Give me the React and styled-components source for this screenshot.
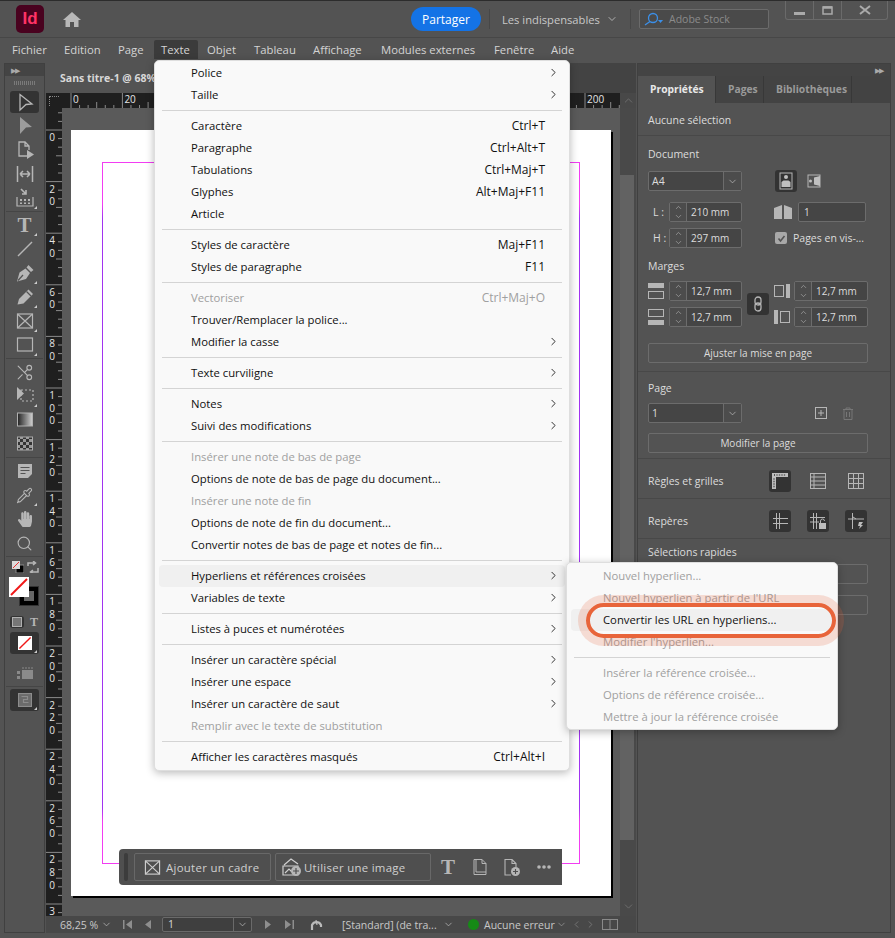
import styled, { createGlobalStyle } from "styled-components";
import { ChevronDown, ChevronUp, ChevronRight, ChevronLeft, Scissors, Search, Pipette } from "lucide-react";
import { FaHandPaper } from "react-icons/fa";

const UI_FONT = `"Open Sans", "Noto Sans", "Liberation Sans", sans-serif`;
const ICON = "#b6b6b6";

const Global = createGlobalStyle`
  * { box-sizing: border-box; }
  html, body { margin: 0; padding: 0; background: #535353; }
  body { font-family: ${UI_FONT}; font-size: 11px; color: #e0e0e0; }
`;

const Frame = styled.div`
  position: relative;
  width: 895px;
  height: 938px;
  overflow: hidden;
  background: #535353;
  border-top: 1px solid #2c2c2c;
`;

/* title bar */
const TitleBar = styled.div`
  display: flex;
  align-items: center;
  height: 37px;
  padding-left: 16px;
  border-bottom: 1px solid #474747;
`;

const Logo = styled.div`
  width: 28px;
  height: 28px;
  border-radius: 5px;
  background: #49021f;
  color: #ff3366;
  font: bold 17px "Liberation Sans", sans-serif;
  display: flex;
  align-items: center;
  justify-content: center;
`;

const Share = styled.button`
  margin-left: auto;
  width: 70px;
  height: 24px;
  border: none;
  border-radius: 12px;
  background: #1473e6;
  color: #fff;
  font: 12px ${UI_FONT};
  padding: 0;
`;

const TitleDivider = styled.span`
  width: 1px;
  height: 20px;
  background: #474747;
  margin: ${(p) => p.$margin};
`;

const WorkspaceName = styled.span`
  width: 98px;
  font-size: 11.2px;
  color: #c8c8c8;
  white-space: nowrap;
`;

const StockBox = styled.div`
  display: flex;
  align-items: center;
  gap: 5px;
  width: 130px;
  height: 20px;
  margin-left: 8px;
  padding-left: 4px;
  background: #4a4a4a;
  border: 1px solid #6b6b6b;
  border-radius: 2px;
  color: #8b8b8b;
  font-size: 10.5px;
`;

const WinControls = styled.div`
  display: flex;
  align-self: flex-start;
  margin: 0 7px 0 16px;
  height: 19px;
  border: 1px solid #6a6a6a;
  border-top: none;
  border-radius: 0 0 3px 3px;
`;

const WinButton = styled.div`
  width: ${(p) => p.$w}px;
  display: flex;
  align-items: center;
  justify-content: center;
  border-left: ${(p) => (p.$first ? "none" : "1px solid #6a6a6a")};
`;

/* menu bar */
const MenuBar = styled.div`
  display: flex;
  gap: 2px;
  height: 25px;
  padding: 2px 0 4px 5px;
`;

const TopItem = styled.div`
  width: ${(p) => p.$w}px;
  padding-left: 7px;
  font-size: 11.3px;
  line-height: 19px;
  color: #d4d4d4;
  white-space: nowrap;
  background: ${(p) => (p.$active ? "#3b3b3b" : "transparent")};
  border-radius: 2px 2px 0 0;
`;

/* main area */
const Workspace = styled.div`
  display: flex;
  height: 870px;
  padding-left: 4px;
`;

const ToolPanel = styled.div`
  width: 41px;
  border: 1px solid #404040;
  display: flex;
  flex-direction: column;
`;

const DockHead = styled.div`
  height: 12px;
  background: #444;
  display: flex;
  align-items: center;
  justify-content: ${(p) => (p.$right ? "flex-end" : "flex-start")};
  padding: 0 ${(p) => (p.$right ? "7px" : "0")} 0 ${(p) => (p.$right ? "0" : "6px")};
  color: #aaa;
  font-size: 7px;
  letter-spacing: -1px;
  flex: none;
`;

const Grip = styled.div`
  height: 14px;
  flex: none;
  margin: 0 9px;
  background: repeating-linear-gradient(90deg, #7a7a7a 0 1px, transparent 1px 2px) center / 100% 4px no-repeat;
`;

const Tool = styled.div`
  position: relative;
  flex: none;
  height: ${(p) => (p.$active ? 22 : 24)}px;
  margin: ${(p) => (p.$active ? "1px 5px" : "0 5px")};
  display: flex;
  align-items: center;
  justify-content: center;
  color: ${ICON};
  background: ${(p) => (p.$active ? "#333" : "transparent")};
  border-radius: 3px;

  &::after {
    content: "";
    display: ${(p) => (p.$corner ? "block" : "none")};
    position: absolute;
    right: 2px;
    bottom: 1px;
    border-left: 3px solid transparent;
    border-bottom: 3px solid #ccc;
  }
`;

const ToolSep = styled.div`
  flex: none;
  height: 1px;
  margin: ${(p) => (p.$wide ? "4px 1px 1px" : "1px")};
  background: ${(p) => (p.$clear ? "transparent" : "#454545")};
`;

const SwatchStrip = styled.div`
  display: flex;
  align-items: center;
  justify-content: space-between;
  height: 13px;
  margin: 2px 5px 0 7px;
  flex: none;
`;

const SwatchStack = styled.div`
  position: relative;
  height: 31px;
  margin: 4px 0 0 4px;
  flex: none;
`;

const Swatch = styled.div`
  position: absolute;
  left: ${(p) => p.$x}px;
  top: ${(p) => p.$y}px;
  width: ${(p) => p.$size}px;
  height: ${(p) => p.$size}px;
`;

const StrokeSwatch = styled(Swatch)`
  background: #000;
  border: 1px solid #333;
  padding: 4px;
  &::before { content: ""; display: block; width: 100%; height: 100%; background: #666; }
`;

const NoneSwatch = styled.svg`
  display: block;
  width: 100%;
  height: 100%;
`;

const FormatRow = styled.div`
  display: flex;
  align-items: center;
  gap: 4px;
  height: 14px;
  margin: 7px 0 2px 5px;
  flex: none;
`;

const FormatBtn = styled.div`
  width: 14px;
  height: 12px;
  border-radius: 3px;
  background: #333;
  display: flex;
  align-items: center;
  justify-content: center;
  &::before { content: ""; width: 8px; height: 8px; background: #777; border: 1px solid #b0b0b0; }
`;

const SerifT = styled.span`
  font: bold ${(p) => p.$size}px / 1 "Liberation Serif", serif;
  color: ${ICON};
  margin-left: ${(p) => p.$ml || 0}px;
`;

/* document column */
const DocColumn = styled.div`
  width: 591px;
  margin-right: 1px;
  display: flex;
  flex-direction: column;
`;

const DocTabs = styled.div`
  flex: none;
  height: 30px;
  background: #434343;
`;

const DocTab = styled.div`
  width: 140px;
  height: 100%;
  padding: 8px 0 0 15px;
  background: #535353;
  font-weight: 700;
  font-size: 10.5px;
  color: #d8d8d8;
  white-space: nowrap;
`;

const RulerRow = styled.div`
  flex: none;
  height: 15px;
  display: flex;
  padding-left: 1px;
`;

const RulerCorner = styled.div`
  width: 16px;
  background: #1f1f1f;
  position: relative;
  &::before {
    content: "";
    position: absolute;
    left: 3px;
    top: 3px;
    width: 9px;
    height: 9px;
    border-top: 1px dotted #888;
    border-left: 1px dotted #888;
  }
`;

const ScrollCap = styled.div`
  width: 16px;
  background: #484848;
  color: #777;
  display: flex;
  align-items: center;
  justify-content: center;
`;

const DocBody = styled.div`
  flex: 1;
  display: flex;
  min-height: 0;
  padding-left: 1px;
`;

const Canvas = styled.div`
  position: relative;
  flex: 1;
  background: #5a5a5a;
  padding: 22px 0 0 9px;
  overflow: hidden;
`;

const PageSheet = styled.div`
  width: 540px;
  height: 766px;
  padding: 32px 0 0 31px;
  background: #fff;
  box-shadow: 2px 2px 0 #000;
`;

const MarginGuide = styled.div`
  width: 478px;
  height: 702px;
  border: 1px solid;
  border-image: linear-gradient(#f23df2 0 6%, #a133f0 8% 92%, #f23df2 94%) 1;
`;

const FloatBar = styled.div`
  position: absolute;
  left: 57px;
  top: 741px;
  width: 443px;
  height: 36px;
  display: flex;
  align-items: center;
  background: #4f4f4f;
  border-radius: 4px 0 0 4px;
  padding-left: 5px;
  color: ${ICON};
`;

const FloatGrip = styled.div`
  width: 4px;
  height: 28px;
  border-radius: 2px;
  background: #3c3c3c;
  margin-right: 6px;
`;

const FloatButton = styled.div`
  width: ${(p) => p.$w}px;
  height: 28px;
  margin-right: 4px;
  padding-left: ${(p) => p.$pad}px;
  display: flex;
  align-items: center;
  gap: ${(p) => p.$gap}px;
  border: 1px solid #686868;
  border-radius: 2px;
  font-size: 11.4px;
  letter-spacing: 0.3px;
  color: #cfcfcf;
  white-space: nowrap;
`;

const FloatIcon = styled.div`
  width: 32px;
  display: flex;
  justify-content: center;
  margin-left: ${(p) => p.$ml || 0}px;
`;

const ScrollTrack = styled.div`
  width: 16px;
  background: #494949;
  padding-top: 67px;
  color: #777;
`;

const ScrollThumb = styled.div`
  width: 14px;
  height: 665px;
  background: #626262;
`;

const ScrollDown = styled.div`
  margin-top: 60px;
  display: flex;
  justify-content: center;
`;

const StatusBar = styled.div`
  flex: none;
  height: 17px;
  margin-left: 1px;
  background: #484848;
  display: flex;
  align-items: center;
  color: #c8c8c8;
  font-size: 10.5px;
`;

const StatusText = styled.span`
  width: ${(p) => p.$w}px;
  margin-left: ${(p) => p.$ml || 0}px;
  white-space: nowrap;
`;

const StatusPage = styled.div`
  display: flex;
  width: 90px;
  height: 15px;
  margin-left: 9px;
  border: 1px solid #6a6a6a;
  border-radius: 2px;
  background: #3f3f3f;
  padding-left: 5px;
  line-height: 13px;
  color: #d8d8d8;
`;

const StatusIcon = styled.span`
  display: flex;
  width: ${(p) => p.$w}px;
  margin-left: ${(p) => p.$ml || 0}px;
  justify-content: center;
  color: ${(p) => p.$color || "#8e8e8e"};
`;

const StatusCaret = styled.span`
  margin-left: auto;
  width: 18px;
  height: 100%;
  border-left: 1px solid #6a6a6a;
  display: flex;
  align-items: center;
  justify-content: center;
  color: #bbb;
`;

const GreenDot = styled.span`
  width: 11px;
  height: 11px;
  border-radius: 50%;
  background: #168a16;
  margin: 0 5px 0 14px;
  flex: none;
`;

const ResizeGrip = styled.span`
  width: 8px;
  height: 8px;
  margin: 4px 0 0 5px;
  background: radial-gradient(#777 40%, transparent 45%) 0 0 / 2px 2px;
  clip-path: polygon(100% 0, 100% 100%, 0 100%);
`;

/* properties panel */
const Panel = styled.div`
  width: 254px;
  border: 1px solid #404040;
  background: #535353;
  display: flex;
  flex-direction: column;
`;

const Tabs = styled.div`
  display: flex;
  height: 27px;
  background: #434343;
  flex: none;
`;

const Tab = styled.div`
  width: ${(p) => p.$w}px;
  padding-left: 12px;
  font-weight: 700;
  font-size: 10.3px;
  line-height: 27px;
  color: ${(p) => (p.$active ? "#e8e8e8" : "#9a9a9a")};
  background: ${(p) => (p.$active ? "#535353" : "#434343")};
  border-right: 1px solid #383838;
  white-space: nowrap;
`;

const Section = styled.div`
  padding: ${(p) => p.$pad || "0 0 0 10px"};
  height: ${(p) => p.$h}px;
  border-bottom: ${(p) => (p.$last ? "none" : "1px solid #484848")};
  display: flex;
  flex-direction: ${(p) => (p.$row ? "row" : "column")};
  align-items: ${(p) => (p.$row ? "center" : "stretch")};
  flex: none;
`;

const Label = styled.div`
  font-size: 10.5px;
  line-height: 14px;
  color: #dcdcdc;
  margin-top: ${(p) => p.$mt || 0}px;
  margin-bottom: ${(p) => p.$mb || 0}px;
  white-space: nowrap;
`;

const Row = styled.div`
  display: flex;
  align-items: center;
`;

const SelectBox = styled.div`
  display: flex;
  align-items: center;
  width: 94px;
  height: 20px;
  padding-left: 3px;
  background: #454545;
  border: 1px solid #6c6c6c;
  border-radius: 2px;
  color: #dcdcdc;
  font-size: 10.5px;
`;

const SelectCaret = styled.span`
  margin-left: auto;
  width: 18px;
  height: 100%;
  border-left: 1px solid #6c6c6c;
  background: #4c4c4c;
  display: flex;
  align-items: center;
  justify-content: center;
  color: #bbb;
`;

const IconButton = styled.div`
  width: 22px;
  height: 22px;
  flex: none;
  margin-left: ${(p) => p.$ml || 0}px;
  display: flex;
  align-items: center;
  justify-content: center;
  border-radius: 3px;
  background: ${(p) => (p.$active ? "#333" : "transparent")};
  color: ${(p) => p.$color || ICON};
`;

const FieldGrid = styled.div`
  display: grid;
  grid-template-columns: ${(p) => p.$cols};
  grid-auto-rows: 20px;
  row-gap: 6px;
  align-items: center;
  margin-top: ${(p) => p.$mt || 0}px;
`;

const DimLabel = styled.span`
  font-size: 10.5px;
  padding-left: 5px;
  color: #dcdcdc;
`;

const Stepper = styled.div`
  display: flex;
  height: 20px;
  border: 1px solid #6c6c6c;
  border-radius: 2px;
  background: #454545;
  color: #dcdcdc;
  font-size: 10px;
  line-height: 18px;
`;

const StepArrows = styled.div`
  width: 17px;
  flex: none;
  border-right: 1px solid #6c6c6c;
  background: #4c4c4c;
  color: #bbb;
  display: flex;
  flex-direction: column;
  align-items: center;
  justify-content: center;
  margin-right: 4px;
`;

const TextField = styled.div`
  height: 20px;
  padding-left: 5px;
  border: 1px solid #6c6c6c;
  border-radius: 2px;
  background: #454545;
  font-size: 10px;
  line-height: 18px;
  color: #dcdcdc;
`;

const Check = styled.span`
  display: flex;
  align-items: center;
  justify-content: center;
  width: 12px;
  height: 12px;
  border-radius: 2px;
  background: #a8a8a8;
  flex: none;
`;

const CheckRow = styled.div`
  display: flex;
  align-items: center;
  gap: 6px;
  grid-column: 4 / 6;
  padding-left: 1px;
  font-size: 10.5px;
  color: #dcdcdc;
  white-space: nowrap;
`;

const PanelIcon = styled.div`
  display: flex;
  color: ${ICON};
`;

const LinkBtn = styled.div`
  grid-column: 3;
  grid-row: 1 / span 2;
  justify-self: center;
  width: 22px;
  height: 22px;
  border-radius: 3px;
  background: #333;
  display: flex;
  align-items: center;
  justify-content: center;
  color: ${ICON};
`;

const WideButton = styled.div`
  width: 220px;
  height: 20px;
  margin-top: ${(p) => p.$mt || 0}px;
  border: 1px solid #6c6c6c;
  border-radius: 2px;
  text-align: center;
  font-size: 10px;
  line-height: 18px;
  color: #dcdcdc;
`;

const ButtonTrio = styled.div`
  display: flex;
  margin: 0 23px 0 auto;
  gap: 16px;
`;

const GhostField = styled.div`
  width: 68px;
  height: 20px;
  margin: ${(p) => p.$mt}px 22px 0 0;
  align-self: flex-end;
  border: 1px solid #6c6c6c;
  border-radius: 2px;
`;

/* menus */
const DropMenu = styled.div`
  position: absolute;
  z-index: ${(p) => p.$z};
  left: ${(p) => p.$x}px;
  top: ${(p) => p.$y}px;
  width: ${(p) => p.$w}px;
  padding: ${(p) => p.$pad};
  background: #f9f9f9;
  border: 1px solid #dedede;
  border-radius: 5px;
  box-shadow: 0 2px 9px rgba(0, 0, 0, 0.28);
  font-size: 11.3px;
`;

const MenuRow = styled.div`
  display: flex;
  align-items: center;
  height: 22px;
  padding: 0 0 2px 32px;
  border-radius: 4px;
  background: ${(p) => (p.$hot ? "#f0f0f0" : "transparent")};
  color: ${(p) => (p.$off ? "#a0a0a0" : "#101010")};
  white-space: nowrap;
`;

const Shortcut = styled.span`
  margin-left: auto;
  font-size: 12px;
`;

const ArrowSlot = styled.span`
  width: 20px;
  flex: none;
  margin-left: ${(p) => (p.$push ? "auto" : "0")};
  padding-left: 2px;
  display: flex;
`;

const MenuSep = styled.div`
  height: 1px;
  margin: 4px 3px;
  background: #d4d4d4;
`;

const Ring = styled.div`
  position: absolute;
  left: 19px;
  top: 40px;
  width: 250px;
  height: 35px;
  border: 4px solid #e8643a;
  border-radius: 18px;
  box-shadow: 0 0 0 8px rgba(232, 100, 58, 0.2);
  pointer-events: none;
`;

/* drawings */
const Svg = ({ w = 22, h = 22, vb, sw = 1.3, fill = "none", children }) => (
  <svg width={w} height={h} viewBox={vb || `0 0 ${w} ${h}`} fill={fill} stroke={fill === "none" ? "currentColor" : "none"} strokeWidth={sw}>
    {children}
  </svg>
);

const FrameX = ({ s = 18 }) => (
  <Svg w={s} h={s} vb="0 0 18 18" sw={1.2}>
    <rect x="1.5" y="2" width="15" height="14" />
    <path d="M1.5 2 16.5 16M16.5 2 1.5 16" />
  </Svg>
);

const Caret = ({ size = 11 }) => <ChevronDown size={size} strokeWidth={1.6} />;

const tools = [
  { active: true, icon: <Svg><path d="M6 3.500 18 13l-6 .5L6 19Z" /></Svg> },
  { icon: <Svg fill="#9c9c9c"><path d="M6 2 18 12l-6 .5L6 19Z" /></Svg> },
  { icon: <Svg><path d="M13 17H5V3h6l4 4v4M11 3v4h4" /><path d="M13 11l7 4.500-7 4.500Z" fill="#b6b6b6" stroke="none" /></Svg> },
  { icon: <Svg sw={1.5}><path d="M3.500 3v16M18.500 3v16M6 11h10M6 11l3-3M6 11l3 3M16 11l-3-3M16 11l-3 3" /></Svg> },
  {
    corner: true,
    sep: true,
    icon: (
      <Svg sw={1.2}>
        <path d="M7 2l5 5M12 3v4H8" strokeWidth="1.6" />
        <path d="M3 10v9h16v-9" />
        <path d="M6 12h2v2H6ZM10 12h2v2h-2ZM14 12h2v2h-2ZM6 15.500h2v1.500H6ZM10 15.500h2v1.500h-2ZM14 15.500h2v1.500h-2Z" fill="#b6b6b6" stroke="none" />
      </Svg>
    ),
  },
  { corner: true, icon: <SerifT $size={21}>T</SerifT> },
  { icon: <Svg sw={1.4}><path d="M4 18 18 4" /></Svg> },
  {
    corner: true,
    icon: (
      <Svg fill="#b6b6b6">
        <path d="M3 19.500 5.500 10.500l6-4 4.500 4.500-4 6ZM12.500 5.500l2-2.500 5 5-2.500 2Z" />
        <path d="M4 18.500 9 13" stroke="#535353" strokeWidth="1.200" />
      </Svg>
    ),
  },
  {
    corner: true,
    icon: (
      <Svg fill="#b6b6b6">
        <path d="M3.500 18.500 5 13 14.500 3.500 19 8 9.500 17.500Z" />
        <path d="M12.500 5.500l4.500 4.500" stroke="#535353" />
      </Svg>
    ),
  },
  { corner: true, icon: <FrameX s={18} /> },
  { corner: true, sep: true, icon: <Svg sw={1.2}><rect x="3.500" y="4" width="15" height="13" /></Svg> },
  { icon: <Scissors size={19} strokeWidth={1.4} style={{ transform: "scaleX(-1)" }} /> },
  { corner: true, icon: <Svg sw={1.2}><path d="M3 2v13l7-6.500Z" fill="#b6b6b6" stroke="none" /><rect x="7" y="5" width="12" height="11" strokeDasharray="2 2" /></Svg> },
  { icon: <Svg sw={0}><defs><linearGradient id="grad"><stop stopColor="#222" /><stop offset="1" stopColor="#d0d0d0" /></linearGradient></defs><rect x="3.500" y="4" width="15" height="13" fill="url(#grad)" stroke="#b0b0b0" strokeWidth="1" /></Svg> },
  { sep: true, icon: <Svg sw={0}><defs><pattern id="chk" width="6" height="6" patternUnits="userSpaceOnUse"><rect width="6" height="6" fill="#999" /><rect width="3" height="3" fill="#333" /><rect x="3" y="3" width="3" height="3" fill="#333" /></pattern></defs><rect x="3.500" y="4" width="15" height="13" fill="url(#chk)" stroke="#aaa" strokeWidth="1" /></Svg> },
  { icon: <Svg fill="#b6b6b6"><path d="M4 4h14v10l-4 4H4ZM6.500 7v1h9V7Zm0 3v1h9v-1Zm0 3v1h5v-1Z" fillRule="evenodd" /></Svg> },
  { corner: true, icon: <Pipette size={17} strokeWidth={1.5} /> },
  { icon: <FaHandPaper size={16} /> },
  { sep: true, icon: <Search size={17} strokeWidth={1.6} /> },
];

const Slash = () => (
  <NoneSwatch viewBox="0 0 20 20">
    <rect width="20" height="20" fill="#fff" />
    <path d="M2 18 18 2" stroke="#f01818" strokeWidth="2" />
  </NoneSwatch>
);

function HRuler() {
  const pitch = 51.4;
  const ticks = [];
  for (let i = 0; i < 66; i++) ticks.push(9 + (i * pitch) / 6);
  return (
    <svg width="558" height="15" style={{ display: "block", background: "#1f1f1f" }}>
      {ticks.map((x, i) => (
        <line key={i} x1={x} x2={x} y1={i % 6 === 0 ? 0 : i % 3 === 0 ? 9 : 12} y2="15" stroke="#8a8a8a" />
      ))}
      {[...Array(11)].map((_, i) => (
        <text key={i} x={9 + i * pitch + 2} y="10" fontSize="10" fontFamily="Open Sans" fill="#e4e4e4">{i * 20}</text>
      ))}
    </svg>
  );
}

function VRuler() {
  const pitch = 51.6;
  const marks = [];
  for (let i = -3; i < 96; i++) marks.push({ y: 22 + (i * pitch) / 6, i });
  return (
    <svg width="16" height="808" style={{ display: "block", background: "#1f1f1f", flex: "none" }}>
      {marks.map(({ y, i }) => (
        <line key={i} x1={i % 6 === 0 ? 0 : i % 3 === 0 ? 10 : 12} x2="16" y1={y} y2={y} stroke="#8a8a8a" />
      ))}
      {[...Array(16)].map((_, k) => (
        <text
          key={k}
          x="6"
          y={22 + k * pitch}
          fontSize="10"
          fontFamily="Open Sans"
          fill="#e4e4e4"
          style={{ writingMode: "vertical-rl", textOrientation: "upright", letterSpacing: "-1.4px" }}
        >
          {k === 15 ? "3" : k * 20}
        </text>
      ))}
    </svg>
  );
}

const menuItems = [
  { t: "Police", a: 1 }, { t: "Taille", a: 1 }, "-",
  { t: "Caractère", k: "Ctrl+T" }, { t: "Paragraphe", k: "Ctrl+Alt+T" }, { t: "Tabulations", k: "Ctrl+Maj+T" }, { t: "Glyphes", k: "Alt+Maj+F11" }, { t: "Article" }, "-",
  { t: "Styles de caractère", k: "Maj+F11" }, { t: "Styles de paragraphe", k: "F11" }, "-",
  { t: "Vectoriser", k: "Ctrl+Maj+O", off: 1 }, { t: "Trouver/Remplacer la police..." }, { t: "Modifier la casse", a: 1 }, "-",
  { t: "Texte curviligne", a: 1 }, "-",
  { t: "Notes", a: 1 }, { t: "Suivi des modifications", a: 1 }, "-",
  { t: "Insérer une note de bas de page", off: 1 }, { t: "Options de note de bas de page du document..." }, { t: "Insérer une note de fin", off: 1 }, { t: "Options de note de fin du document..." }, { t: "Convertir notes de bas de page et notes de fin..." }, "-",
  { t: "Hyperliens et références croisées", a: 1, hot: 1 }, { t: "Variables de texte", a: 1 }, "-",
  { t: "Listes à puces et numérotées", a: 1 }, "-",
  { t: "Insérer un caractère spécial", a: 1 }, { t: "Insérer une espace", a: 1 }, { t: "Insérer un caractère de saut", a: 1 }, { t: "Remplir avec le texte de substitution", off: 1 }, "-",
  { t: "Afficher les caractères masqués", k: "Ctrl+Alt+I" },
];

const subItems = [
  { t: "Nouvel hyperlien...", off: 1 }, { t: "Nouvel hyperlien à partir de l'URL", off: 1 }, { t: "Convertir les URL en hyperliens...", hot: 1 }, { t: "Modifier l'hyperlien...", off: 1 }, "-",
  { t: "Insérer la référence croisée...", off: 1 }, { t: "Options de référence croisée...", off: 1 }, { t: "Mettre à jour la référence croisée", off: 1 },
];

function MenuList({ items }) {
  return items.map((it, i) =>
    it === "-" ? (
      <MenuSep key={i} />
    ) : (
      <MenuRow key={i} $off={it.off} $hot={it.hot}>
        {it.t}
        {it.k && <Shortcut>{it.k}</Shortcut>}
        {(it.k || it.a) && (
          <ArrowSlot $push={!it.k}>
            {it.a && <ChevronRight size={13} strokeWidth={1.7} color="#222" />}
          </ArrowSlot>
        )}
      </MenuRow>
    )
  );
}

const topMenu = [["Fichier", 50], ["Edition", 52], ["Page", 41], ["Texte", 44], ["Objet", 45], ["Tableau", 57], ["Affichage", 66], ["Modules externes", 111], ["Fenêtre", 55], ["Aide", 36]];

function Stepped({ value }) {
  return (
    <Stepper>
      <StepArrows>
        <ChevronUp size={9} strokeWidth={1.5} />
        <ChevronDown size={9} strokeWidth={1.5} />
      </StepArrows>
      {value}
    </Stepper>
  );
}

function Properties() {
  const cols = "21px 73px 32px 20px 74px";
  return (
    <Panel>
      <DockHead $right>▶▶</DockHead>
      <Tabs>
        <Tab $active $w={78}>Propriétés</Tab>
        <Tab $w={48}>Pages</Tab>
        <Tab $w={88}>Bibliothèques</Tab>
      </Tabs>
      <Section $h={33} $pad="10px 0 0 10px">
        <Label>Aucune sélection</Label>
      </Section>
      <Section $h={236}>
        <Label $mt={11} $mb={9}>Document</Label>
        <Row>
          <SelectBox>A4<SelectCaret><Caret /></SelectCaret></SelectBox>
          <IconButton $active $ml={33}>
            <Svg w={14} h={18} vb="0 0 14 18" sw={1}><rect x="1" y="1" width="12" height="16" /><circle cx="7" cy="5" r="2" fill="#c0c0c0" stroke="none" /><path d="M2.500 15v-5l2-1.500h5l2 1.500v5Z" fill="#c0c0c0" stroke="none" /></Svg>
          </IconButton>
          <IconButton $ml={6}>
            <Svg w={14} h={14} vb="0 0 14 14" sw={1}><rect x="1" y="1" width="12" height="12" /><circle cx="3.500" cy="7" r="1.500" fill="#c0c0c0" stroke="none" /><path d="M7 3.500 13 2v10L7 10.500Z" fill="#c0c0c0" stroke="none" /></Svg>
          </IconButton>
        </Row>
        <FieldGrid $cols="21px 73px 32px 24px 68px" $mt={10}>
          <DimLabel>L :</DimLabel>
          <Stepped value="210 mm" />
          <span />
          <PanelIcon>
            <Svg w={18} h={16} vb="0 0 18 16" fill="#b6b6b6"><path d="M0 4 8 1v14H0ZM10 1l8 3v11h-8Z" /></Svg>
          </PanelIcon>
          <TextField>1</TextField>
          <DimLabel>H :</DimLabel>
          <Stepped value="297 mm" />
          <span />
          <CheckRow>
            <Check><svg width="9" height="9" viewBox="0 0 9 9" fill="none" stroke="#535353" strokeWidth="1.6"><path d="M1.500 4.500 3.500 7l4-5" /></svg></Check>
            Pages en vis-...
          </CheckRow>
        </FieldGrid>
        <Label $mt={11} $mb={8}>Marges</Label>
        <FieldGrid $cols={cols}>
          <PanelIcon><Svg w={16} h={16} vb="0 0 16 16" sw={1}><rect x="0" y="0" width="16" height="5" fill="#b6b6b6" stroke="none" /><rect x=".5" y="8.500" width="15" height="7" /></Svg></PanelIcon>
          <Stepped value="12,7 mm" />
          <LinkBtn>
            <svg width="10" height="16" viewBox="0 0 10 16" fill="none" stroke="currentColor" strokeWidth="1.3"><rect x="2" y="1" width="6" height="8" rx="3" /><rect x="2" y="7" width="6" height="8" rx="3" /></svg>
          </LinkBtn>
          <PanelIcon><Svg w={16} h={14} vb="0 0 16 14" sw={1}><rect x=".5" y="1.500" width="9" height="11" /><rect x="12" y="0" width="4" height="14" fill="#b6b6b6" stroke="none" /></Svg></PanelIcon>
          <Stepped value="12,7 mm" />
          <PanelIcon><Svg w={16} h={16} vb="0 0 16 16" sw={1}><rect x=".5" y=".5" width="15" height="7" /><rect x="0" y="11" width="16" height="5" fill="#b6b6b6" stroke="none" /></Svg></PanelIcon>
          <Stepped value="12,7 mm" />
          <PanelIcon><Svg w={16} h={14} vb="0 0 16 14" sw={1}><rect x="0" y="0" width="4" height="14" fill="#b6b6b6" stroke="none" /><rect x="6.500" y="1.500" width="9" height="11" /></Svg></PanelIcon>
          <Stepped value="12,7 mm" />
        </FieldGrid>
        <WideButton $mt={16}>Ajuster la mise en page</WideButton>
      </Section>
      <Section $h={87}>
        <Label $mt={9} $mb={7}>Page</Label>
        <Row>
          <SelectBox>1<SelectCaret><Caret /></SelectCaret></SelectBox>
          <IconButton $ml={68}>
            <Svg w={12} h={12} vb="0 0 12 12" sw={1}><rect x=".5" y=".5" width="11" height="11" /><path d="M6 3v6M3 6h6" /></Svg>
          </IconButton>
          <IconButton $ml={5} $color="#777">
            <Svg w={12} h={13} vb="0 0 12 13" sw={1}><path d="M1 2.500h10M4 2.500V1h4v1.500M2 2.500V12.500h8V2.500M4.500 5v5M7.500 5v5" /></Svg>
          </IconButton>
        </Row>
        <WideButton $mt={9}>Modifier la page</WideButton>
      </Section>
      <Section $h={40} $row $pad="5px 0 0 10px">
        <Label>Règles et grilles</Label>
        <ButtonTrio>
          <IconButton $active>
            <Svg w={16} h={16} vb="0 0 16 16" fill="#bdbdbd"><path d="M0 0h16v4H4v12H0Z" /><path d="M2 2h1M5 1.500v1M7.500 1.500v1M10 1.500v1M12.500 1.500v1M1.500 6h1M1.500 8.500h1M1.500 11h1M1.500 13.500h1" stroke="#333" /></Svg>
          </IconButton>
          <IconButton>
            <Svg w={16} h={16} vb="0 0 16 16" sw={1}><rect x=".5" y=".5" width="15" height="15" /><path d="M0 4h16M0 8h16M0 12h16M4 0v16" /></Svg>
          </IconButton>
          <IconButton>
            <Svg w={16} h={16} vb="0 0 16 16" sw={1}><rect x=".5" y=".5" width="15" height="15" /><path d="M0 5.500h16M0 10.500h16M5.500 0v16M10.500 0v16" /></Svg>
          </IconButton>
        </ButtonTrio>
      </Section>
      <Section $h={40} $row $pad="5px 0 0 10px">
        <Label>Repères</Label>
        <ButtonTrio>
          <IconButton $active>
            <Svg w={16} h={16} vb="0 0 16 16" sw={1}><path d="M4.500 0v16M7.500 0v16M1 5.500h15M1 10.500h15" /></Svg>
          </IconButton>
          <IconButton $active>
            <Svg w={16} h={16} vb="0 0 16 16" sw={1}><path d="M3.500 0v16M6.500 0v16M0 4.500h15M0 9h9" /><rect x="9" y="10" width="7" height="6" fill="#bdbdbd" stroke="none" /><path d="M10.500 10V8a2 2 0 0 1 4 0" /></Svg>
          </IconButton>
          <IconButton $active>
            <Svg w={16} h={16} vb="0 0 16 16" sw={1}><path d="M4.500 0v16M0 6h16M5 4l3 2" /><path d="M11 9h4l-2 3h2l-4 4 1-3h-2Z" fill="#bdbdbd" stroke="none" /></Svg>
          </IconButton>
        </ButtonTrio>
      </Section>
      <Section $h={100} $last $pad="6px 0 0 10px">
        <Label>Sélections rapides</Label>
        <GhostField $mt={5} />
        <GhostField $mt={11} />
      </Section>
    </Panel>
  );
}

export default function App() {
  return (
    <>
      <Global />
      <Frame>
        <TitleBar>
          <Logo>Id</Logo>
          <svg width="18" height="15" viewBox="0 0 18 15" fill="#b8b8b8" style={{ marginLeft: 19 }}>
            <path d="M9 0l9 8h-2.500v7H11v-5H7v5H2.500V8H0Z" />
          </svg>
          <Share>Partager</Share>
          <TitleDivider $margin="0 12px 0 8px" />
          <WorkspaceName>Les indispensables</WorkspaceName>
          <ChevronDown size={12} strokeWidth={1.8} color="#bbb" style={{ marginLeft: 6 }} />
          <TitleDivider $margin="0 0 0 12px" />
          <StockBox>
            <svg width="20" height="14" viewBox="0 0 20 14" fill="none" stroke="#3b8fe8" strokeWidth="1.3">
              <circle cx="9" cy="6" r="4.500" />
              <path d="M6 9.500 1 13" />
              <path d="M14 8h5l-2.500 3Z" fill="#3b8fe8" stroke="none" />
            </svg>
            Adobe Stock
          </StockBox>
          <WinControls>
            <WinButton $first $w={27}>
              <svg width="11" height="12" viewBox="0 0 11 12"><rect y="8" width="11" height="3" fill="#aaa" /></svg>
            </WinButton>
            <WinButton $w={28}>
              <svg width="11" height="9" viewBox="0 0 11 9" fill="none" stroke="#aaa" strokeWidth="1.5"><rect x="1" y="1" width="9" height="7" /><path d="M1 1.500h9" strokeWidth="2.500" /></svg>
            </WinButton>
            <WinButton $w={46}>
              <svg width="12" height="10" viewBox="0 0 12 10" stroke="#aaa" strokeWidth="2"><path d="M1 1l10 8M11 1 1 9" /></svg>
            </WinButton>
          </WinControls>
        </TitleBar>

        <MenuBar>
          {topMenu.map(([t, w]) => (
            <TopItem key={t} $w={w} $active={t === "Texte"}>{t}</TopItem>
          ))}
        </MenuBar>

        <Workspace>
          <ToolPanel>
            <DockHead>▶▶</DockHead>
            <Grip />
            {tools.map((t, i) => (
              <div key={i}>
                <Tool $active={t.active} $corner={t.corner}>{t.icon}</Tool>
                {t.sep && <ToolSep />}
              </div>
            ))}
            <SwatchStrip>
              <svg width="12" height="12" viewBox="0 0 12 12"><rect x="4" y="4" width="8" height="8" fill="#000" stroke="#888" /><rect width="8" height="8" fill="#ddd" /><path d="M1 7 7 1" stroke="#e33" /></svg>
              <svg width="12" height="12" viewBox="0 0 12 12" fill="none" stroke="#b6b6b6" strokeWidth="1.5"><path d="M1 5V2h7M6 0l2.500 2L6 4M11 7v4H4M6 9l-2.500 2L6 13" /></svg>
            </SwatchStrip>
            <SwatchStack>
              <StrokeSwatch $x={10} $y={9} $size={20} />
              <Swatch $x={0} $y={0} $size={20}><Slash /></Swatch>
            </SwatchStack>
            <FormatRow>
              <FormatBtn />
              <SerifT $size={12} $ml={2}>T</SerifT>
            </FormatRow>
            <Tool $active $corner>
              <svg width="14" height="14" viewBox="0 0 20 20"><rect width="20" height="20" fill="#fff" /><path d="M2 18 18 2" stroke="#f01818" strokeWidth="2" /></svg>
            </Tool>
            <ToolSep $wide $clear />
            <Tool>
              <svg width="16" height="12" viewBox="0 0 16 12" fill="#8a8a8a"><rect x="5" y="3" width="11" height="9" /><rect x="0" y="4" width="3" height="3" /><rect x="0" y="9" width="3" height="3" /><path d="M6 0v2M9 0v2M12 0v2M15 0v2" stroke="#8a8a8a" /></svg>
            </Tool>
            <ToolSep />
            <Tool $active $corner>
              <svg width="14" height="14" viewBox="0 0 14 14" fill="none" stroke="#8c8c8c" strokeWidth="1.200"><rect x=".5" y=".5" width="13" height="13" fill="#6b6b6b" /><path d="M3.500 3.500h6v3h-4v3h5" /></svg>
            </Tool>
          </ToolPanel>

          <DocColumn>
            <DocTabs><DocTab>Sans titre-1 @ 68%</DocTab></DocTabs>
            <RulerRow>
              <RulerCorner />
              <HRuler />
              <ScrollCap><ChevronUp size={13} strokeWidth={1.4} /></ScrollCap>
            </RulerRow>
            <DocBody>
              <VRuler />
              <Canvas>
                <PageSheet><MarginGuide /></PageSheet>
                <FloatBar>
                  <FloatGrip />
                  <FloatButton $w={137} $pad={9} $gap={5}><FrameX s={17} />Ajouter un cadre</FloatButton>
                  <FloatButton $w={156} $pad={6} $gap={2}>
                    <Svg w={20} h={20} vb="0 0 20 20" sw={1.2}>
                      <path d="M2 8 9 2l7 5M1 9h15v9H1Z" />
                      <path d="M3 16l4-4 3 3" />
                      <circle cx="14" cy="14" r="5" fill="#b6b6b6" stroke="none" />
                      <path d="M14 11v6M11 14h6" stroke="#4f4f4f" />
                    </Svg>
                    Utiliser une image
                  </FloatButton>
                  <FloatIcon $ml={-3}><SerifT $size={21}>T</SerifT></FloatIcon>
                  <FloatIcon>
                    <Svg w={14} h={16} vb="0 0 14 16" sw={1}><path d="M1 .5h8l4 4V15.500H1ZM9 .5v4h4M3 .5V13h10" /></Svg>
                  </FloatIcon>
                  <FloatIcon>
                    <Svg w={16} h={17} vb="0 0 16 17" sw={1.1}><path d="M7 16H1V.5h7l4 4V8M8 .5v4h4" /><circle cx="11.500" cy="12.500" r="4.500" fill="#b6b6b6" stroke="none" /><path d="M11.500 10v5M9 12.500h5" stroke="#4f4f4f" /></Svg>
                  </FloatIcon>
                  <FloatIcon>
                    <svg width="14" height="4" viewBox="0 0 14 4" fill="#b6b6b6"><circle cx="2" cy="2" r="1.800" /><circle cx="7" cy="2" r="1.800" /><circle cx="12" cy="2" r="1.800" /></svg>
                  </FloatIcon>
                </FloatBar>
              </Canvas>
              <ScrollTrack>
                <ScrollThumb />
                <ScrollDown><ChevronDown size={13} strokeWidth={1.4} /></ScrollDown>
              </ScrollTrack>
            </DocBody>
            <StatusBar>
              <StatusText $ml={14} $w={36}>68,25 %</StatusText>
              <StatusIcon $w={20} $color="#bbb"><Caret /></StatusIcon>
              <StatusIcon $w={14} $ml={4}><svg width="9" height="9" viewBox="0 0 9 9" fill="currentColor"><path d="M0 0h1.500v9H0ZM9 0v9L3 4.500Z" /></svg></StatusIcon>
              <StatusIcon $w={10} $ml={9}><svg width="6" height="9" viewBox="0 0 6 9" fill="currentColor"><path d="M6 0v9L0 4.500Z" /></svg></StatusIcon>
              <StatusPage>1<StatusCaret><Caret /></StatusCaret></StatusPage>
              <StatusIcon $w={10} $ml={11}><svg width="6" height="9" viewBox="0 0 6 9" fill="currentColor"><path d="M0 0v9l6-4.500Z" /></svg></StatusIcon>
              <StatusIcon $w={14} $ml={9}><svg width="9" height="9" viewBox="0 0 9 9" fill="currentColor"><path d="M7.500 0H9v9H7.500ZM0 0v9l6-4.500Z" /></svg></StatusIcon>
              <StatusIcon $w={16} $ml={13} $color="#bbb"><svg width="14" height="13" viewBox="0 0 14 13" fill="none" stroke="currentColor" strokeWidth="2.200"><path d="M2 12V7a5 5 0 0 1 9 0v2" /><path d="M6 2l1 5" strokeWidth="1.200" /></svg></StatusIcon>
              <StatusText $ml={17} $w={96}>[Standard] (de tra...</StatusText>
              <StatusIcon $w={12} $ml={4} $color="#bbb"><Caret /></StatusIcon>
              <GreenDot />
              <StatusText $w={68}>Aucune erreur</StatusText>
              <StatusIcon $w={12} $ml={3} $color="#999"><Caret /></StatusIcon>
              <StatusIcon $w={12} $ml={3} $color="#777"><ChevronLeft size={11} /></StatusIcon>
              <StatusIcon $w={12} $ml={2} $color="#777"><ChevronRight size={11} /></StatusIcon>
              <StatusIcon $w={18} $ml={5} $color="#8a8a8a"><svg width="16" height="11" viewBox="0 0 16 11" fill="none" stroke="currentColor"><rect x=".5" y=".5" width="15" height="10" /><path d="M8 0v11" /></svg></StatusIcon>
              <ResizeGrip />
            </StatusBar>
          </DocColumn>

          <Properties />
        </Workspace>

        <DropMenu $x={154} $y={59} $w={416} $z={2} $pad="1px 4px 2px">
          <MenuList items={menuItems} />
        </DropMenu>
        <DropMenu $x={566} $y={561} $w={272} $z={3} $pad="2px 4px 1px">
          <MenuList items={subItems} />
          <Ring />
        </DropMenu>
      </Frame>
    </>
  );
}
